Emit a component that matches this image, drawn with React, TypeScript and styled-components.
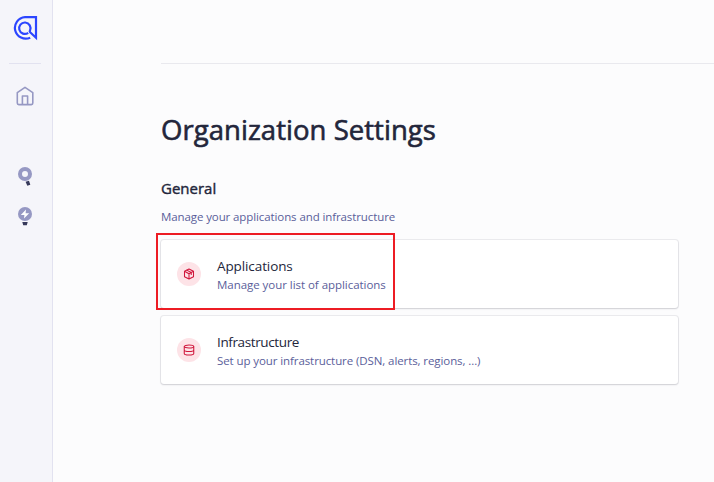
import React from "react";
import styled, { createGlobalStyle } from "styled-components";

const GlobalStyle = createGlobalStyle`
  * { box-sizing: border-box; }
  body { margin: 0; background: #fcfcfd; font-family: "Open Sans", "Noto Sans", sans-serif; }
`;

const Page = styled.div`
  display: flex;
  width: 714px;
  height: 482px;
  overflow: hidden;
`;

const Sidebar = styled.nav`
  width: 53px;
  flex: none;
  background: #f5f5fa;
  border-right: 1px solid #e2e2f0;
  display: flex;
  flex-direction: column;
  padding: 15px 0 0 9px;
  svg { display: block; }
`;

const LogoLink = styled.a`
  padding-left: 3px;
  height: 48px;
`;

const SidebarRule = styled.div`
  width: 32px;
  height: 1px;
  background: #e2e2f0;
`;

const NavItem = styled.a<{ $gap: number }>`
  margin-top: ${(p) => p.$gap}px;
  padding-left: 6px;
  height: 24px;
`;

const Main = styled.main`
  flex: 1;
  padding-left: 108px;
`;

const TopBar = styled.header`
  height: 64px;
  border-bottom: 1px solid #e9e9ee;
`;

const Title = styled.h1`
  margin: 47px 0 0;
  font-size: 27.5px;
  line-height: 38px;
  font-weight: 400;
  -webkit-text-stroke: 0.6px #23263b;
  letter-spacing: 0.04px;
  color: #23263b;
  white-space: nowrap;
`;

const SectionTitle = styled.h2`
  margin: 28px 0 0;
  font-size: 15px;
  line-height: 22px;
  font-weight: 400;
  -webkit-text-stroke: 0.4px #23263b;
  color: #23263b;
`;

const Description = styled.p<{ $spacing: number }>`
  margin: 0;
  font-size: 11.5px;
  line-height: 18px;
  letter-spacing: ${(p) => p.$spacing}px;
  color: #5a5e9a;
  white-space: nowrap;
`;

const SectionText = styled.div`
  margin: 9px 0 14px;
`;

const CardList = styled.div`
  display: flex;
  flex-direction: column;
  gap: 8px;
  width: 517px;
`;

const Card = styled.a`
  position: relative;
  display: flex;
  align-items: center;
  height: 68px;
  padding-left: 16px;
  gap: 16px;
  border-radius: 3px;
  background: #fff;
  box-shadow: 0 0 0 1px rgba(35, 38, 59, 0.08), 0 1px 2px rgba(35, 38, 59, 0.14);
`;

const CardText = styled.div`
  padding-top: 2px;
`;

const IconCircle = styled.span`
  width: 24px;
  height: 24px;
  border-radius: 50%;
  background: #fde3e7;
  display: flex;
  align-items: center;
  justify-content: center;
`;

const CardTitle = styled.div<{ $spacing: number }>`
  font-size: 13.5px;
  line-height: 20px;
  letter-spacing: ${(p) => p.$spacing}px;
  color: #23263b;
`;

const Highlight = styled.div`
  position: absolute;
  left: -5px;
  top: -7px;
  width: 239px;
  height: 77px;
  border: 2px solid #ed1c24;
  pointer-events: none;
`;

const Logo = () => (
  <svg width="26" height="26" viewBox="12 15 26 26" fill="none" stroke="#2c46ff" strokeWidth="2.2">
    <path d="M30.2 37.7A10.8 10.8 0 1 1 25 17.1H36V37.8L29.6 31.8" />
    <path d="M28.2 32.8A5.7 5.7 0 1 1 30 30.6L29.4 32" />
  </svg>
);

const HomeIcon = () => (
  <svg width="20" height="20" viewBox="15 86 20 20" fill="none" stroke="#9698c3" strokeWidth="1.6" strokeLinejoin="round">
    <path d="M17.3 92.6 25 87.3 32.8 92.6V103.1Q32.8 104.6 31.3 104.6H18.8Q17.3 104.6 17.3 103.1Z" />
    <path d="M22.4 104.6V96H27.6V104.6" />
  </svg>
);

const SearchIcon = () => (
  <svg width="20" height="20" viewBox="15 166 20 20">
    <circle cx="25" cy="174" r="5" fill="none" stroke="#9698c3" strokeWidth="4" />
    <path d="M25.6 181.8 29 180.8 30.3 184.7 27.3 185.8Z" fill="#36395a" />
  </svg>
);

const RecommendIcon = () => (
  <svg width="20" height="20" viewBox="15 206 20 20">
    <circle cx="25" cy="214" r="7" fill="#9698c3" />
    <path d="M26 209.5 20.8 215H24.4L24 218.5 29.2 213.2H25.6Z" fill="#fff" />
    <path d="M22.3 222H27.7L26.8 225.3H23.2Z" fill="#36395a" />
  </svg>
);

const BoxIcon = () => (
  <svg width="12" height="12" viewBox="0 0 24 24" fill="none" stroke="#d0173c" strokeWidth="2.1" strokeLinejoin="round" strokeLinecap="round">
    <path d="M12 2 21 6.5V17.5L12 22 3 17.5V6.5ZM3 6.5 12 11.5 21 6.5M12 11.5V22M7.5 4.2 16.5 9V13" />
  </svg>
);

const DatabaseIcon = () => (
  <svg width="12" height="12" viewBox="0 0 24 24" fill="none" stroke="#d0173c" strokeWidth="2.1">
    <ellipse cx="12" cy="5" rx="9.5" ry="3" />
    <path d="M2.5 5V19C2.5 23 21.5 23 21.5 19V5M2.5 12C2.5 16 21.5 16 21.5 12" />
  </svg>
);

export default function App() {
  return (
    <>
      <GlobalStyle />
      <Page>
        <Sidebar>
          <LogoLink><Logo /></LogoLink>
          <SidebarRule />
          <NavItem $gap={22}><HomeIcon /></NavItem>
          <NavItem $gap={56}><SearchIcon /></NavItem>
          <NavItem $gap={16}><RecommendIcon /></NavItem>
        </Sidebar>
        <Main>
          <TopBar />
          <Title>Organization Settings</Title>
          <SectionTitle>General</SectionTitle>
          <SectionText>
            <Description $spacing={-0.1}>Manage your applications and infrastructure</Description>
          </SectionText>
          <CardList>
            <Card>
              <IconCircle><BoxIcon /></IconCircle>
              <CardText>
                <CardTitle $spacing={-0.1}>Applications</CardTitle>
                <Description $spacing={-0.04}>Manage your list of applications</Description>
              </CardText>
              <Highlight />
            </Card>
            <Card>
              <IconCircle><DatabaseIcon /></IconCircle>
              <CardText>
                <CardTitle $spacing={-0.38}>Infrastructure</CardTitle>
                <Description $spacing={-0.09}>Set up your infrastructure (DSN, alerts, regions, ...)</Description>
              </CardText>
            </Card>
          </CardList>
        </Main>
      </Page>
    </>
  );
}
